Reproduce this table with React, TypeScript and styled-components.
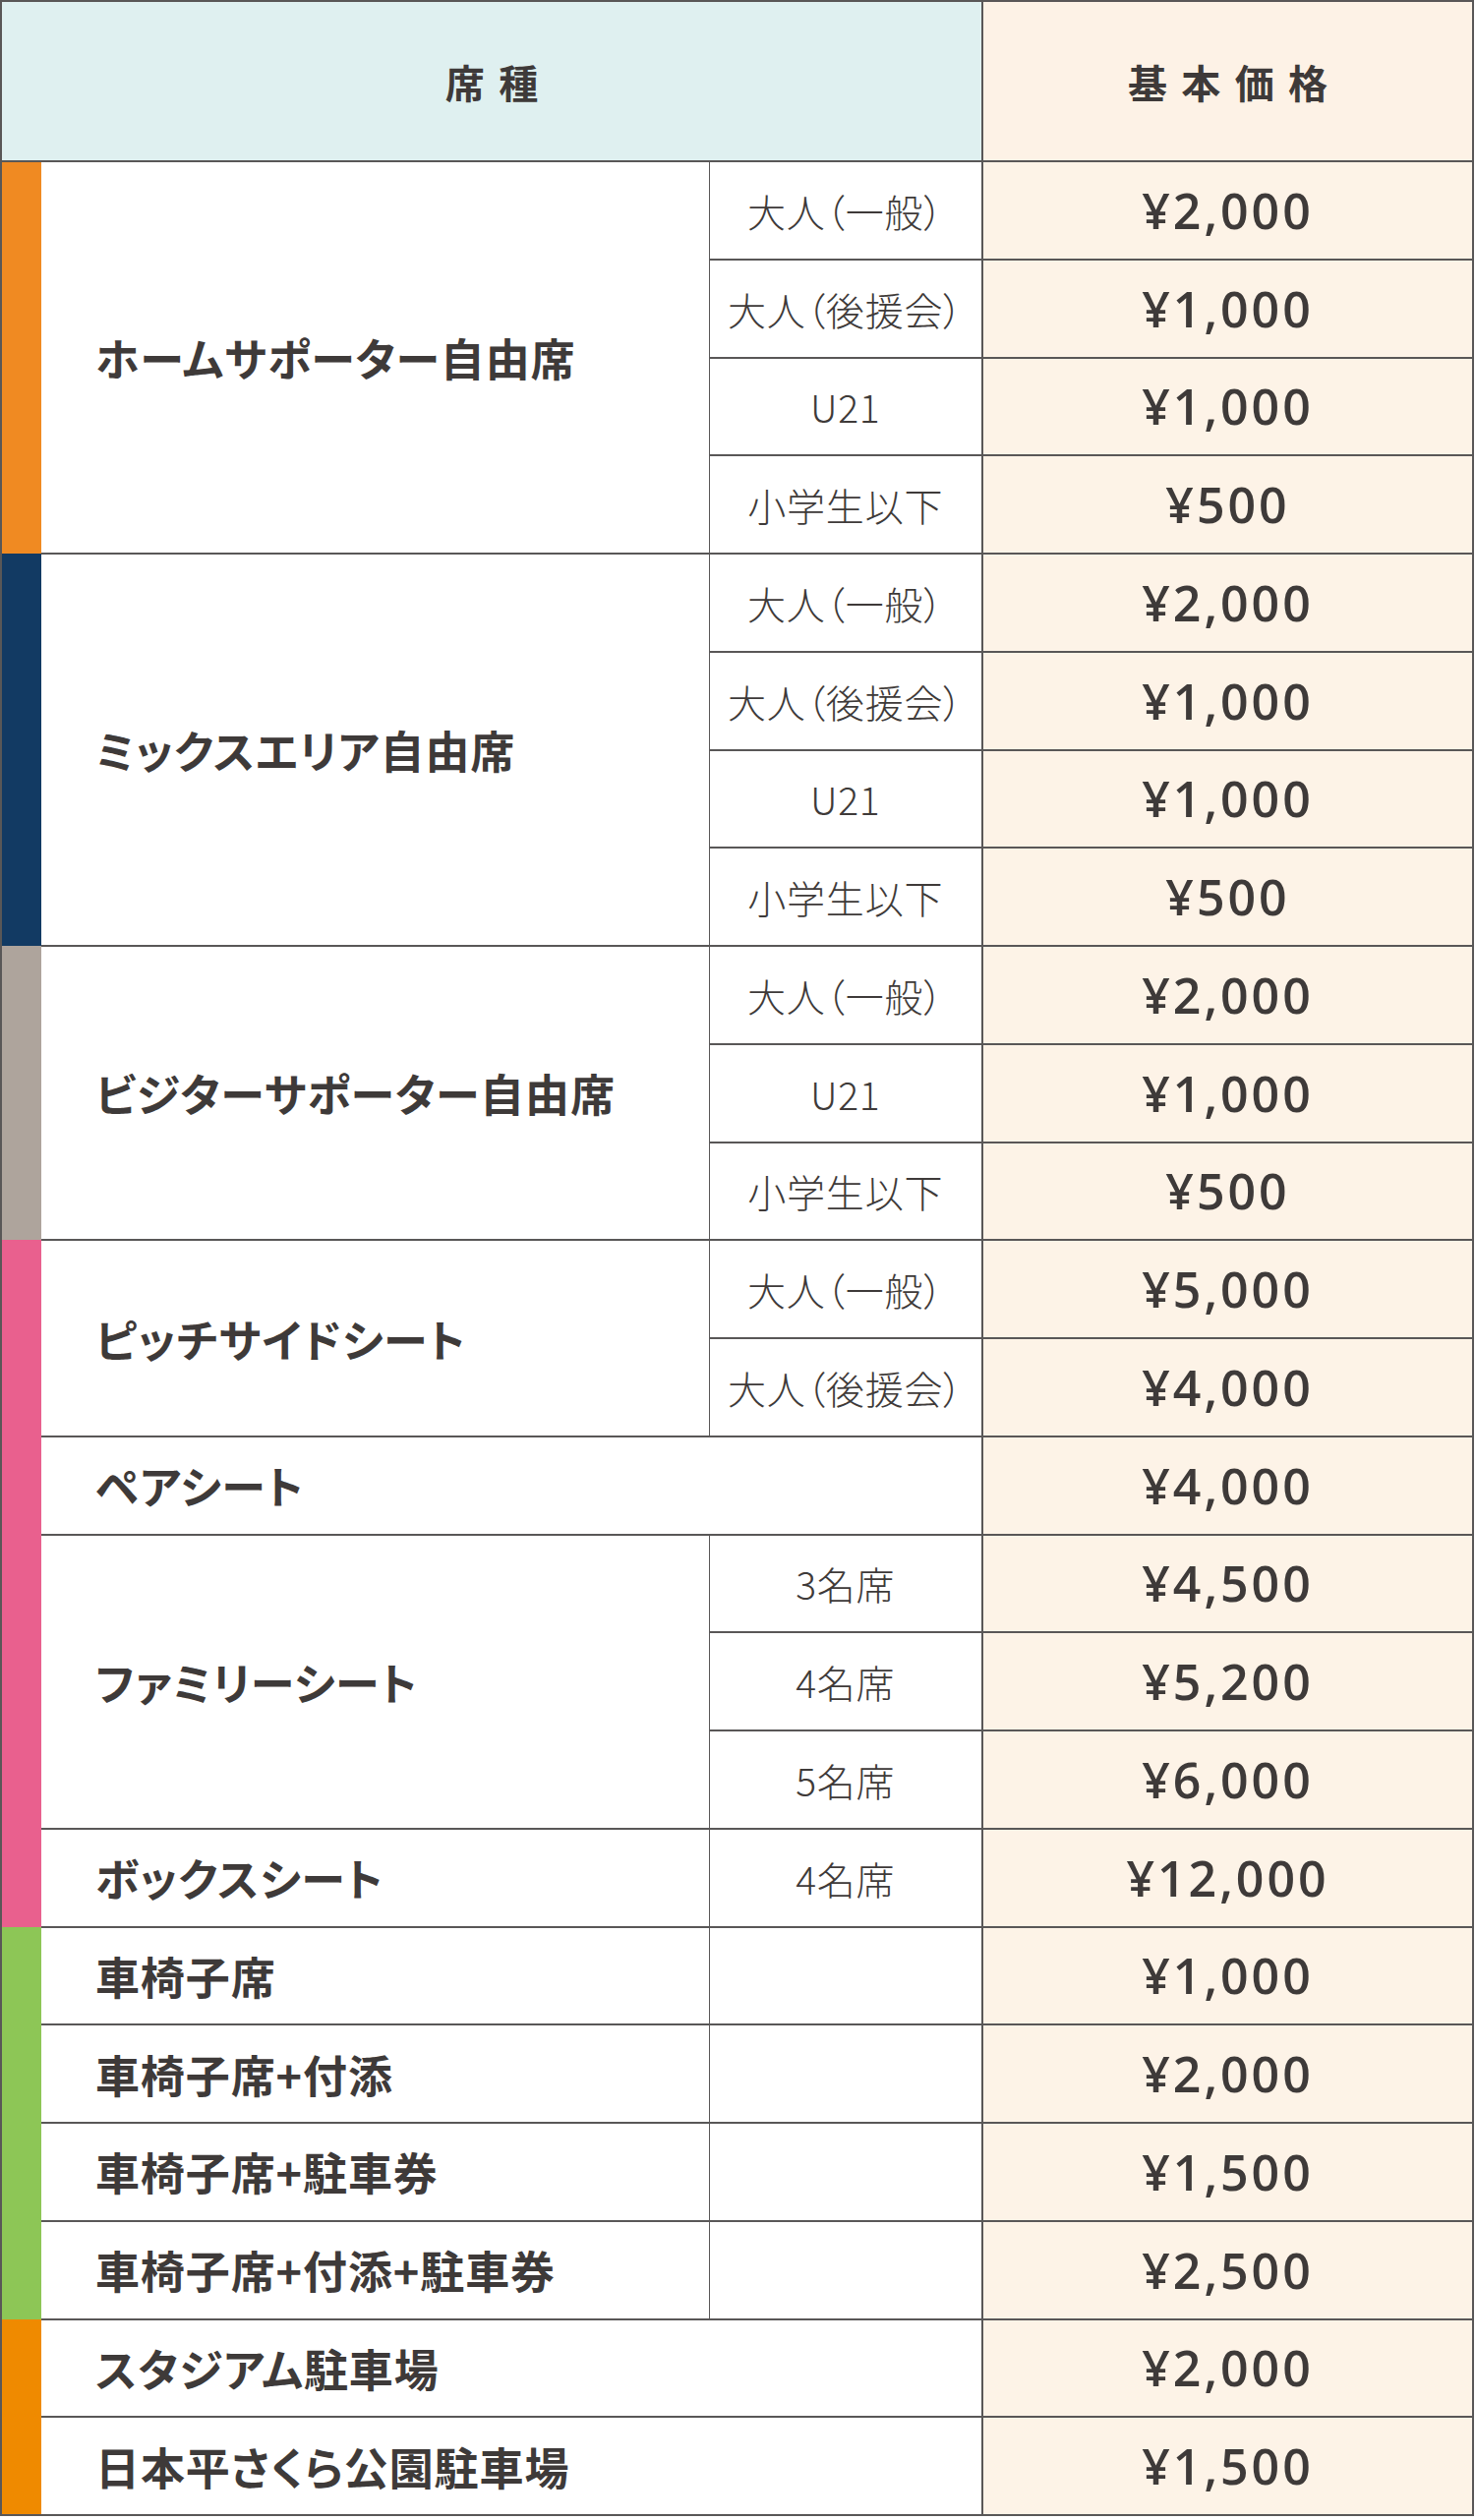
import React from "react";
import styled, { createGlobalStyle } from "styled-components";

const GlobalStyle = createGlobalStyle`
  html, body {
    margin: 0;
    padding: 0;
    background: #ffffff;
  }
  body {
    font-family: "Noto Sans CJK JP", "Noto Sans", sans-serif;
    color: #3e3a39;
  }
`;

const LINE = "#595757";

const Table = styled.table`
  width: 1499px;
  border-collapse: collapse;
  table-layout: fixed;
  border: 2px solid ${LINE};
`;

const HeadCell = styled.th<{ $tone: "seat" | "price" }>`
  height: 161px;
  padding: 0 0 0 0.36em;
  background: ${(p) => (p.$tone === "seat" ? "#dff0f0" : "#fdf2e6")};
  border: 2px solid ${LINE};
  font-size: 40px;
  font-weight: 700;
  letter-spacing: 0.36em;
  text-align: center;
  vertical-align: middle;
`;

const Row = styled.tr`
  height: 99.75px;
`;

const Bar = styled.td<{ $color: string }>`
  padding: 0;
  background: ${(p) => p.$color};
  border: none;
  border-left: 2px solid ${LINE};
`;

const NameCell = styled.td`
  padding: 0 0 0 55px;
  border-top: 2px solid ${LINE};
  border-bottom: 2px solid ${LINE};
  font-size: 45px;
  font-weight: 700;
  letter-spacing: 0.02em;
  font-feature-settings: "palt";
  white-space: nowrap;
  vertical-align: middle;
`;

const SubCell = styled.td`
  padding: 0;
  border: 1px solid ${LINE};
  border-top-width: 2px;
  border-bottom-width: 2px;
  font-size: 39px;
  font-weight: 300;
  letter-spacing: 0.02em;
  font-feature-settings: "palt";
  text-align: center;
  white-space: nowrap;
  vertical-align: middle;
`;

const PriceCell = styled.td`
  padding: 0;
  background: #fdf3e7;
  border: 2px solid ${LINE};
  font-family: "Open Sans", "Noto Sans", sans-serif;
  font-size: 50px;
  font-weight: 600;
  letter-spacing: 0.06em;
  text-align: center;
  vertical-align: middle;
`;

type Item = {
  name: string;
  subs?: [string, string][];
  price?: string;
};

type Group = { color: string; items: Item[] };

const adultTiers: [string, string][] = [
  ["大人（一般）", "¥2,000"],
  ["大人（後援会）", "¥1,000"],
  ["U21", "¥1,000"],
  ["小学生以下", "¥500"],
];

const groups: Group[] = [
  { color: "#f08a22", items: [{ name: "ホームサポーター自由席", subs: adultTiers }] },
  { color: "#123a63", items: [{ name: "ミックスエリア自由席", subs: adultTiers }] },
  {
    color: "#aea49c",
    items: [
      {
        name: "ビジターサポーター自由席",
        subs: [
          ["大人（一般）", "¥2,000"],
          ["U21", "¥1,000"],
          ["小学生以下", "¥500"],
        ],
      },
    ],
  },
  {
    color: "#e9608e",
    items: [
      {
        name: "ピッチサイドシート",
        subs: [
          ["大人（一般）", "¥5,000"],
          ["大人（後援会）", "¥4,000"],
        ],
      },
      { name: "ペアシート", price: "¥4,000" },
      {
        name: "ファミリーシート",
        subs: [
          ["3名席", "¥4,500"],
          ["4名席", "¥5,200"],
          ["5名席", "¥6,000"],
        ],
      },
      { name: "ボックスシート", subs: [["4名席", "¥12,000"]] },
    ],
  },
  {
    color: "#8dc656",
    items: [
      { name: "車椅子席", subs: [["", "¥1,000"]] },
      { name: "車椅子席+付添", subs: [["", "¥2,000"]] },
      { name: "車椅子席+駐車券", subs: [["", "¥1,500"]] },
      { name: "車椅子席+付添+駐車券", subs: [["", "¥2,500"]] },
    ],
  },
  {
    color: "#ef8a00",
    items: [
      { name: "スタジアム駐車場", price: "¥2,000" },
      { name: "日本平さくら公園駐車場", price: "¥1,500" },
    ],
  },
];

const rowCount = (item: Item) => (item.subs ? item.subs.length : 1);

const PriceTable: React.FC = () => {
  const rows: React.ReactNode[] = [];

  groups.forEach((group, gi) => {
    const span = group.items.reduce((n, it) => n + rowCount(it), 0);
    group.items.forEach((item, ii) => {
      const lines = item.subs ?? [[null, item.price ?? ""]];
      lines.forEach(([sub, price], si) => {
        const first = ii === 0 && si === 0;
        rows.push(
          <Row key={`${gi}-${ii}-${si}`}>
            {first && <Bar $color={group.color} rowSpan={span} />}
            {si === 0 && (
              <NameCell rowSpan={rowCount(item)} colSpan={item.subs ? 1 : 2}>
                {item.name}
              </NameCell>
            )}
            {item.subs && <SubCell>{sub}</SubCell>}
            <PriceCell>{price}</PriceCell>
          </Row>
        );
      });
    });
  });

  return (
    <Table>
      <colgroup>
        <col style={{ width: 41 }} />
        <col style={{ width: 679 }} />
        <col style={{ width: 278 }} />
        <col style={{ width: 499 }} />
      </colgroup>
      <thead>
        <tr>
          <HeadCell $tone="seat" colSpan={3}>
            席種
          </HeadCell>
          <HeadCell $tone="price">基本価格</HeadCell>
        </tr>
      </thead>
      <tbody>{rows}</tbody>
    </Table>
  );
};

export default function App() {
  return (
    <>
      <GlobalStyle />
      <PriceTable />
    </>
  );
}
